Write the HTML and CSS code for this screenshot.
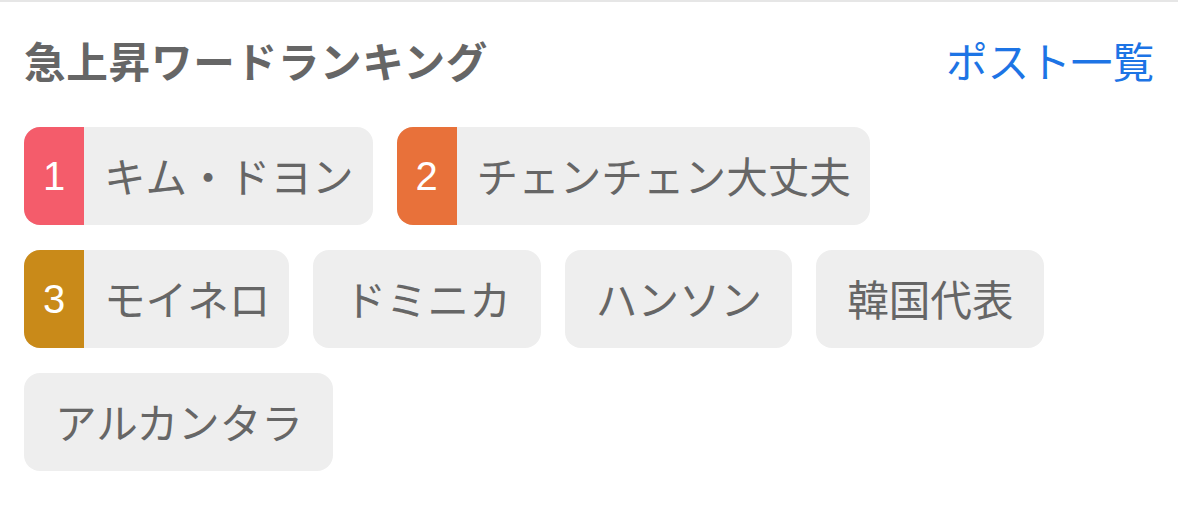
FILE: index.html
```html
<!DOCTYPE html>
<html lang="ja">
<head>
    <meta charset="utf-8">
    <title>急上昇ワードランキング</title>
    <link rel="stylesheet" href="styles.css">
</head>
<body>
    <div class="ranking">
        <!-- Heading row with link to post list -->
        <div class="ranking-header">
            <h2 class="ranking-title">急上昇ワードランキング</h2>
            <a class="ranking-link" href="#">ポスト一覧</a>
        </div>

        <div class="word-list">
            <a class="word ranked" href="#"><span class="rank rank-1">1</span><span class="word-text">キム・ドヨン</span></a>
            <a class="word ranked" href="#"><span class="rank rank-2">2</span><span class="word-text">チェンチェン大丈夫</span></a>
            <a class="word ranked" href="#"><span class="rank rank-3">3</span><span class="word-text">モイネロ</span></a>
            <a class="word" href="#"><span class="word-text">ドミニカ</span></a>
            <a class="word" href="#"><span class="word-text">ハンソン</span></a>
            <a class="word" href="#"><span class="word-text">韓国代表</span></a>
            <a class="word" href="#"><span class="word-text">アルカンタラ</span></a>
        </div>
    </div>
</body>
</html>
```

FILE: styles.css
```css
body {
    margin: 0;
    background-color: #fff;
    font-family: "Noto Sans CJK JP", "Noto Sans", sans-serif;
    color: #666;
}
.ranking {
    border-top: 2px solid #e6e6e6;
    padding: 28px 24px 30px;
}
.ranking-header {
    display: flex;
    justify-content: space-between;
    align-items: center;
    height: 62px;
    margin-bottom: 35px;
}
.ranking-title {
    margin: 0;
    font-size: 41.6px;
    font-weight: bold;
    letter-spacing: 0.7px;
    color: #666;
    line-height: 1;
}
.ranking-link {
    font-size: 41.6px;
    color: #1d74e5;
    text-decoration: none;
    line-height: 1;
}
/* Word chips */
.word-list {
    display: flex;
    flex-wrap: wrap;
    gap: 25px 24px;
}
.word {
    display: flex;
    align-items: center;
    height: 98px;
    padding: 0 30px 0 31px;
    background-color: #eeeeee;
    border-radius: 16px;
    overflow: hidden;
    text-decoration: none;
    color: #666;
}
.word.ranked {
    padding: 0 19px 0 0;
}
.word-text {
    font-size: 41.6px;
    line-height: 1;
}
.rank {
    display: flex;
    align-items: center;
    justify-content: center;
    align-self: stretch;
    width: 60px;
    margin-right: 20px;
    font-family: "Liberation Sans", Arial, sans-serif;
    font-size: 40px;
    color: #fff;
}
.rank-1 {
    background-color: #f45c6b;
}
.rank-2 {
    background-color: #e8713a;
}
.rank-3 {
    background-color: #c98a19;
}
```
